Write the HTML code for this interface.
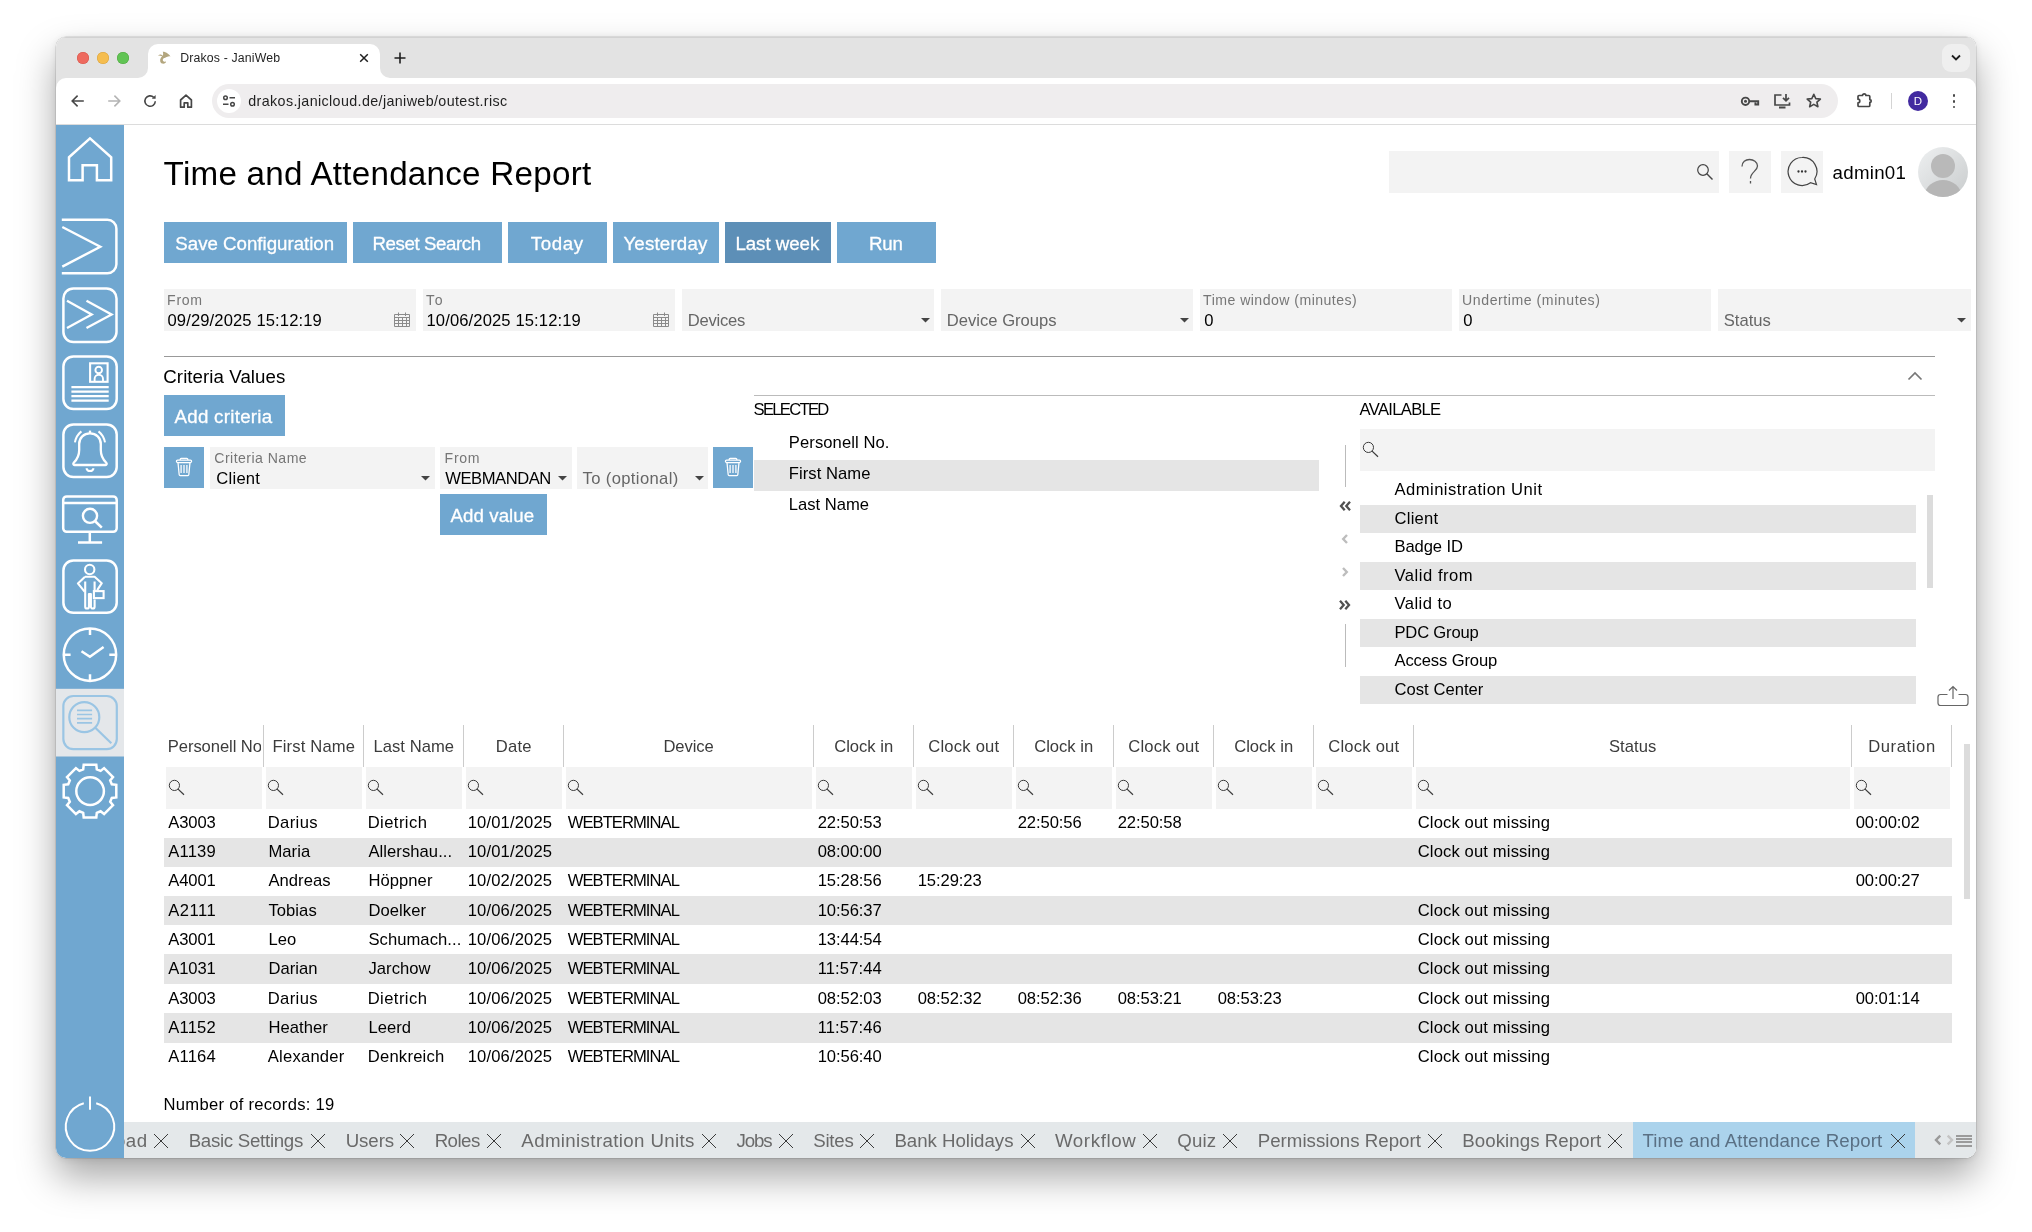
<!DOCTYPE html>
<html lang="en"><head><meta charset="utf-8"><title>Drakos - JaniWeb</title>
<style>
html,body{margin:0;padding:0}
body{width:2032px;height:1232px;background:#fff;position:relative;overflow:hidden;font-family:"Liberation Sans",sans-serif}
#win{position:absolute;left:56px;top:37px;width:1920px;height:1121px;border-radius:10px;overflow:hidden;background:#fff;will-change:transform}
#shadow{position:absolute;left:56px;top:37px;width:1920px;height:1121px;border-radius:10px;box-shadow:0 0 0 0.500px rgba(0,0,0,.16),0 19px 38px rgba(0,0,0,.35),0 1px 7px rgba(0,0,0,.09)}
#win div,#win svg.a,#win span.t{position:absolute}
#win span.t{white-space:nowrap;font-family:"Liberation Sans",sans-serif}
#win i{display:block}
</style></head><body>
<div id="shadow"></div>
<div id="win">
<div style="left:0px;top:0px;width:1920px;height:60px;background:#e3e3e3;"></div>
<div style="left:0px;top:0px;width:1920px;height:1px;background:#d2d2d2;"></div>
<div style="left:0px;top:41px;width:1920px;height:46px;background:#fff;border-radius:10px 10px 0 0;"></div>
<div style="left:0px;top:87px;width:1920px;height:1px;background:#dcdcdc;"></div>
<div style="left:21px;top:15px;width:12px;height:12px;background:#ee6a5f;border-radius:50%;box-shadow:inset 0 0 0 0.5px #d5554a;"></div>
<div style="left:41px;top:15px;width:12px;height:12px;background:#f5bd4f;border-radius:50%;box-shadow:inset 0 0 0 0.5px #d8a13c;"></div>
<div style="left:61px;top:15px;width:12px;height:12px;background:#61c454;border-radius:50%;box-shadow:inset 0 0 0 0.5px #4fa63f;"></div>
<div style="left:92px;top:7px;width:232px;height:34px;background:#fff;border-radius:10px 10px 0 0;"></div>
<svg class="a" style="left:82px;top:31px;" width="10" height="10" viewBox="0 0 10 10"><path d="M10 0v10H0A10 10 0 0 0 10 0z" fill="#fff"/></svg>
<svg class="a" style="left:324px;top:31px;" width="10" height="10" viewBox="0 0 10 10"><path d="M0 0v10h10A10 10 0 0 1 0 0z" fill="#fff"/></svg>
<svg class="a" style="left:101px;top:13px;" width="16" height="16" viewBox="0 0 16 16"><path d="M0.800 5.400C2 4.600 3 4.300 3.800 4.400C4.600 4.500 5.300 5 5.900 5.700C6.300 4.200 6.200 2.800 5.700 1.800C7.500 1.800 9.400 2.400 10.600 3.400C12 4.300 13 5.300 13.500 6.500C12.300 6.200 11 6.400 9.800 6.900C9.200 7.100 8.700 7.400 8.300 7.700C7 8 6.200 8.500 5.900 9.300C5.600 10.200 5.900 11 6.700 11.400C7.400 11.800 8.300 11.800 9 11.600C9 12.100 8.800 12.500 8.600 12.800C7.500 13.600 6.200 13.800 5.100 13.500C4.100 13.100 3.400 12.300 3.200 11.200C3 10.100 3.200 9 3.800 8.100C4.200 7.400 4.700 6.800 5.200 6.300C4 5.600 2.400 5.400 0.800 5.400Z" fill="#b3a67e"/></svg>
<span class="t" style="left:124.30px;top:15px;font-size:12.3px;line-height:12.3px;color:#1f1f1f;letter-spacing:0.152px;">Drakos - JaniWeb</span>
<svg class="a" style="left:302px;top:15px;" width="12" height="12" viewBox="0 0 12 12"><path d="M2.200 2.200l7.600 7.600M9.800 2.200l-7.600 7.600" stroke="#1f1f1f" stroke-width="1.500" fill="none"/></svg>
<svg class="a" style="left:337px;top:14px;" width="14" height="14" viewBox="0 0 14 14"><path d="M7 1.500v11M1.500 7h11" stroke="#1f1f1f" stroke-width="1.600" fill="none"/></svg>
<div style="left:1886px;top:7px;width:28px;height:28px;background:#efefef;border-radius:9px;"></div>
<svg class="a" style="left:1893px;top:15px;" width="14" height="12" viewBox="0 0 14 12"><path d="M3 3.500l4 4 4-4" stroke="#1f1f1f" stroke-width="1.800" fill="none"/></svg>
<svg class="a" style="left:13px;top:55px;" width="18" height="18" viewBox="0 0 18 18"><path d="M14.800 9H3.700M8.600 3.600L3.200 9l5.400 5.400" stroke="#474747" stroke-width="1.600" fill="none"/></svg>
<svg class="a" style="left:49px;top:55px;" width="18" height="18" viewBox="0 0 18 18"><path d="M3.200 9h11.100M9.400 3.600L14.800 9l-5.400 5.400" stroke="#b4b4b4" stroke-width="1.600" fill="none"/></svg>
<svg class="a" style="left:85px;top:55px;" width="18" height="18" viewBox="0 0 18 18"><path d="M14.300 9.300A5.200 5.200 0 1 1 12.700 5.300" stroke="#474747" stroke-width="1.600" fill="none"/><path d="M14.600 3v3.800h-3.800z" fill="#474747"/></svg>
<svg class="a" style="left:121px;top:55px;" width="18" height="18" viewBox="0 0 18 18"><path d="M3.600 8L9 3.200 14.400 8v7.200h-3.600v-4.400H7.200v4.400H3.600z" stroke="#474747" stroke-width="1.700" fill="none" stroke-linejoin="round"/></svg>
<div style="left:156px;top:47px;width:1626px;height:34px;background:#efedee;border-radius:17px;"></div>
<div style="left:161px;top:52px;width:24px;height:24px;background:#fff;border-radius:50%;"></div>
<svg class="a" style="left:165px;top:56px;" width="16" height="16" viewBox="0 0 16 16"><g stroke="#474747" stroke-width="1.500" fill="none"><circle cx="4.500" cy="4.800" r="1.800"/><path d="M8.500 4.800h5.500"/><circle cx="11.500" cy="11.200" r="1.800"/><path d="M2 11.200h5.500"/></g></svg>
<span class="t" style="left:192.30px;top:57px;font-size:14.3px;line-height:14.3px;color:#1f1f1f;letter-spacing:0.372px;">drakos.janicloud.de/janiweb/outest.risc</span>
<svg class="a" style="left:1683px;top:55px;" width="22" height="18" viewBox="0 0 22 18"><g fill="none" stroke="#474747" stroke-width="1.900"><circle cx="6.500" cy="9.300" r="3.700"/><path d="M10.200 9.300h9v3.200h-2.800v-2"/></g><circle cx="6.500" cy="9.300" r="1.500" fill="#474747"/></svg>
<svg class="a" style="left:1716px;top:54px;" width="20" height="20" viewBox="0 0 20 20"><g fill="none" stroke="#474747" stroke-width="1.700"><path d="M9.500 4H3v10h14.500V11.500"/><path d="M7 16.500h6.500" stroke-width="2"/><path d="M14 3v6.500M11 6.800l3 3 3-3"/></g></svg>
<svg class="a" style="left:1749px;top:55.3px;" width="17.6" height="17.6" viewBox="0 0 20 20"><path d="M10 2.600l2.250 4.900 5.250.55-3.950 3.550 1.150 5.200L10 14.100l-4.700 2.700 1.150-5.200L2.500 8.050l5.250-.55z" fill="none" stroke="#474747" stroke-width="1.800" stroke-linejoin="round"/></svg>
<svg class="a" style="left:1798px;top:54px;" width="20" height="20" viewBox="0 0 20 20"><path d="M5 4.500H8.500a1.700 1.700 0 0 1 3.400 0H14.800a1 1 0 0 1 1 1V8.600a1.400 1.400 0 0 1 0 2.800v3.100a1 1 0 0 1-1 1H5a1 1 0 0 1-1-1V11.800a1.800 1.800 0 0 0 0-3.600V5.500a1 1 0 0 1 1-1z" fill="none" stroke="#474747" stroke-width="1.700" stroke-linejoin="round"/></svg>
<div style="left:1834.5px;top:56px;width:1.5px;height:16px;background:#d4d4d4;"></div>
<div style="left:1852px;top:54px;width:20px;height:20px;background:#422aa0;border-radius:50%;"></div>
<span class="t" style="left:1857.85px;top:59px;font-size:11.5px;line-height:11.5px;color:#fff;letter-spacing:0.000px;">D</span>
<div style="left:1896.6px;top:57.2px;width:2.8px;height:2.8px;background:#474747;border-radius:50%;"></div>
<div style="left:1896.6px;top:62.9px;width:2.8px;height:2.8px;background:#474747;border-radius:50%;"></div>
<div style="left:1896.6px;top:68.6px;width:2.8px;height:2.8px;background:#474747;border-radius:50%;"></div>
<div style="left:0px;top:88px;width:68px;height:1033px;background:#70a7d0;"></div>
<span class="t" style="left:107.60px;top:120px;font-size:33.2px;line-height:33.2px;color:#000;letter-spacing:0.254px;">Time and Attendance Report</span>
<div style="left:1333px;top:114px;width:330px;height:42px;background:#f3f3f3;"></div>
<div style="left:1673px;top:114px;width:42px;height:42px;background:#f3f3f3;"></div>
<div style="left:1725px;top:114px;width:42px;height:42px;background:#f3f3f3;"></div>
<svg class="a" style="left:1640px;top:126px;" width="18" height="18" viewBox="0 0 18 18"><circle cx="7" cy="7" r="5.300" fill="none" stroke="#444" stroke-width="1.200"/><path d="M10.800 10.800L16.500 16.500" stroke="#444" stroke-width="1.400"/></svg>
<svg class="a" style="left:1680px;top:119px;" width="28" height="32" viewBox="0 0 28 32"><path d="M6 10.500C6 6 9.500 3.500 13.500 3.500S21.500 6 21.500 10c0 5-7 6-7 12.500" fill="none" stroke="#555" stroke-width="1.300"/><path d="M14.500 25v2.500" stroke="#555" stroke-width="1.300"/></svg>
<svg class="a" style="left:1729px;top:118px;" width="34" height="34" viewBox="0 0 34 34"><path d="M17 2.500a14 14 0 1 0 8.500 25.200l6 1.800-1.800-5.500A14 14 0 0 0 17 2.500z" fill="none" stroke="#444" stroke-width="1.200"/><g fill="#333"><circle cx="13.500" cy="16.500" r="1.150"/><circle cx="17" cy="16.500" r="1.150"/><circle cx="20.500" cy="16.500" r="1.150"/></g></svg>
<span class="t" style="left:1776.50px;top:127px;font-size:18.7px;line-height:18.7px;color:#000;letter-spacing:0.295px;">admin01</span>
<div style="left:1862px;top:109.5px;width:50px;height:50px;border-radius:50%;background:linear-gradient(135deg,#eef0f1,#c9cccd);overflow:hidden"><i style="position:absolute;left:12.900px;top:7.200px;width:24.400px;height:24.400px;border-radius:50%;background:#b9b9b9"></i><i style="position:absolute;left:7px;top:33px;width:36px;height:30px;border-radius:50% 50% 0 0;background:#b6b6b6"></i></div>
<div style="left:108px;top:185px;width:183px;height:41px;background:#70a7d0;"></div>
<span class="t" style="left:119.30px;top:198px;font-size:18.7px;line-height:18.7px;color:#fff;letter-spacing:-0.005px;-webkit-text-stroke:0.300px #fff;">Save Configuration</span>
<div style="left:297px;top:185px;width:149px;height:41px;background:#70a7d0;"></div>
<span class="t" style="left:316.50px;top:198px;font-size:18.7px;line-height:18.7px;color:#fff;letter-spacing:-0.419px;-webkit-text-stroke:0.300px #fff;">Reset Search</span>
<div style="left:452px;top:185px;width:99px;height:41px;background:#70a7d0;"></div>
<span class="t" style="left:474.80px;top:198px;font-size:18.7px;line-height:18.7px;color:#fff;letter-spacing:0.590px;-webkit-text-stroke:0.300px #fff;">Today</span>
<div style="left:557px;top:185px;width:106px;height:41px;background:#70a7d0;"></div>
<span class="t" style="left:567.40px;top:198px;font-size:18.7px;line-height:18.7px;color:#fff;letter-spacing:0.187px;-webkit-text-stroke:0.300px #fff;">Yesterday</span>
<div style="left:669px;top:185px;width:106px;height:41px;background:#5d8fb7;"></div>
<span class="t" style="left:679.40px;top:198px;font-size:18.7px;line-height:18.7px;color:#fff;letter-spacing:-0.029px;-webkit-text-stroke:0.300px #fff;">Last week</span>
<div style="left:781px;top:185px;width:99px;height:41px;background:#70a7d0;"></div>
<span class="t" style="left:812.90px;top:198px;font-size:18.7px;line-height:18.7px;color:#fff;letter-spacing:-0.099px;-webkit-text-stroke:0.300px #fff;">Run</span>
<div style="left:108px;top:252px;width:252px;height:42px;background:#f3f3f3;"></div>
<span class="t" style="left:111.10px;top:256px;font-size:14.1px;line-height:14.1px;color:#767676;letter-spacing:0.679px;">From</span>
<span class="t" style="left:111.50px;top:276px;font-size:16.6px;line-height:16.6px;color:#000;letter-spacing:0.112px;">09/29/2025 15:12:19</span>
<svg class="a" style="left:337px;top:274px;" width="18" height="17" viewBox="0 0 18 17"><g fill="none" stroke="#8a8a8a" stroke-width="1"><path d="M1.500 3.500h15v12h-15z"/><path d="M1.500 6.500h15M1.500 9.500h15M1.500 12.500h15M5.500 6.500v9M9.500 6.500v9M13.500 6.500v9"/><path d="M5.500 1.500v3.500M12.500 1.500v3.500"/></g></svg>
<div style="left:367px;top:252px;width:252px;height:42px;background:#f3f3f3;"></div>
<span class="t" style="left:370.10px;top:256px;font-size:14.1px;line-height:14.1px;color:#767676;letter-spacing:1.615px;">To</span>
<span class="t" style="left:370.50px;top:276px;font-size:16.6px;line-height:16.6px;color:#000;letter-spacing:0.112px;">10/06/2025 15:12:19</span>
<svg class="a" style="left:596px;top:274px;" width="18" height="17" viewBox="0 0 18 17"><g fill="none" stroke="#8a8a8a" stroke-width="1"><path d="M1.500 3.500h15v12h-15z"/><path d="M1.500 6.500h15M1.500 9.500h15M1.500 12.500h15M5.500 6.500v9M9.500 6.500v9M13.500 6.500v9"/><path d="M5.500 1.500v3.500M12.500 1.500v3.500"/></g></svg>
<div style="left:626px;top:252px;width:252px;height:42px;background:#f3f3f3;"></div>
<span class="t" style="left:631.80px;top:276px;font-size:16.6px;line-height:16.6px;color:#666;letter-spacing:-0.247px;">Devices</span>
<svg class="a" style="left:864.5px;top:281px;" width="9" height="5" viewBox="0 0 9 5"><path d="M0 0h9L4.500 4.500z" fill="#444"/></svg>
<div style="left:885px;top:252px;width:252px;height:42px;background:#f3f3f3;"></div>
<span class="t" style="left:890.80px;top:276px;font-size:16.6px;line-height:16.6px;color:#666;letter-spacing:0.006px;">Device Groups</span>
<svg class="a" style="left:1123.5px;top:281px;" width="9" height="5" viewBox="0 0 9 5"><path d="M0 0h9L4.500 4.500z" fill="#444"/></svg>
<div style="left:1144px;top:252px;width:252px;height:42px;background:#f3f3f3;"></div>
<span class="t" style="left:1147.10px;top:256px;font-size:14.1px;line-height:14.1px;color:#767676;letter-spacing:0.465px;">Time window (minutes)</span>
<span class="t" style="left:1148.20px;top:276px;font-size:16.6px;line-height:16.6px;color:#000;letter-spacing:0.066px;">0</span>
<div style="left:1403px;top:252px;width:252px;height:42px;background:#f3f3f3;"></div>
<span class="t" style="left:1406.10px;top:256px;font-size:14.1px;line-height:14.1px;color:#767676;letter-spacing:0.560px;">Undertime (minutes)</span>
<span class="t" style="left:1407.20px;top:276px;font-size:16.6px;line-height:16.6px;color:#000;letter-spacing:0.066px;">0</span>
<div style="left:1662px;top:252px;width:253px;height:42px;background:#f3f3f3;"></div>
<span class="t" style="left:1667.80px;top:276px;font-size:16.6px;line-height:16.6px;color:#666;letter-spacing:-0.015px;">Status</span>
<svg class="a" style="left:1900.5px;top:281px;" width="9" height="5" viewBox="0 0 9 5"><path d="M0 0h9L4.500 4.500z" fill="#444"/></svg>
<div style="left:108px;top:319px;width:1771px;height:1px;background:#999;"></div>
<span class="t" style="left:107.30px;top:331px;font-size:18.7px;line-height:18.7px;color:#000;letter-spacing:0.059px;">Criteria Values</span>
<svg class="a" style="left:1851px;top:333px;" width="16" height="11" viewBox="0 0 16 11"><path d="M1.500 9.500L8 3l6.500 6.500" fill="none" stroke="#777" stroke-width="1.700"/></svg>
<div style="left:698px;top:358px;width:1181px;height:1px;background:#bbb;"></div>
<div style="left:108px;top:358px;width:121px;height:41px;background:#70a7d0;"></div>
<span class="t" style="left:118.50px;top:371px;font-size:18.7px;line-height:18.7px;color:#fff;letter-spacing:0.288px;-webkit-text-stroke:0.300px #fff;">Add criteria</span>
<div style="left:108px;top:410px;width:40px;height:41px;background:#70a7d0;"></div>
<svg class="a" style="left:119px;top:420px;" width="18" height="20" viewBox="0 0 18 20"><g fill="none" stroke="#fff" stroke-width="1.250" stroke-linejoin="round"><rect x="1.400" y="3.100" width="15.200" height="2.400" rx="1.200"/><path d="M5.200 3.100V2.300a1 1 0 0 1 1-1h5.600a1 1 0 0 1 1 1v0.800"/><path d="M3 5.600l1.200 12.200a1 1 0 0 0 1 0.900h7.600a1 1 0 0 0 1-0.900l1.200-12.200"/><path d="M6.100 8v8M9 8v8M11.900 8v8"/></g></svg>
<div style="left:154px;top:410px;width:225px;height:42px;background:#f3f3f3;"></div>
<span class="t" style="left:158.30px;top:414px;font-size:14.1px;line-height:14.1px;color:#767676;letter-spacing:0.454px;">Criteria Name</span>
<span class="t" style="left:160.30px;top:434px;font-size:16.6px;line-height:16.6px;color:#000;letter-spacing:0.244px;">Client</span>
<svg class="a" style="left:365px;top:439px;" width="9" height="5" viewBox="0 0 9 5"><path d="M0 0h9L4.500 4.500z" fill="#444"/></svg>
<div style="left:384px;top:410px;width:132px;height:42px;background:#f3f3f3;"></div>
<span class="t" style="left:388.60px;top:414px;font-size:14.1px;line-height:14.1px;color:#767676;letter-spacing:0.679px;">From</span>
<span class="t" style="left:389.30px;top:434px;font-size:16.6px;line-height:16.6px;color:#000;letter-spacing:-0.460px;">WEBMANDAN</span>
<svg class="a" style="left:502px;top:439px;" width="9" height="5" viewBox="0 0 9 5"><path d="M0 0h9L4.500 4.500z" fill="#444"/></svg>
<div style="left:521px;top:410px;width:131px;height:42px;background:#f3f3f3;"></div>
<span class="t" style="left:526.50px;top:434px;font-size:16.6px;line-height:16.6px;color:#666;letter-spacing:0.375px;">To (optional)</span>
<svg class="a" style="left:638.5px;top:439px;" width="9" height="5" viewBox="0 0 9 5"><path d="M0 0h9L4.500 4.500z" fill="#444"/></svg>
<div style="left:657px;top:410px;width:40px;height:41px;background:#70a7d0;"></div>
<svg class="a" style="left:668px;top:420px;" width="18" height="20" viewBox="0 0 18 20"><g fill="none" stroke="#fff" stroke-width="1.250" stroke-linejoin="round"><rect x="1.400" y="3.100" width="15.200" height="2.400" rx="1.200"/><path d="M5.200 3.100V2.300a1 1 0 0 1 1-1h5.600a1 1 0 0 1 1 1v0.800"/><path d="M3 5.600l1.200 12.200a1 1 0 0 0 1 0.900h7.600a1 1 0 0 0 1-0.900l1.200-12.200"/><path d="M6.100 8v8M9 8v8M11.900 8v8"/></g></svg>
<div style="left:384px;top:457px;width:107px;height:41px;background:#70a7d0;"></div>
<span class="t" style="left:394.60px;top:470px;font-size:18.7px;line-height:18.7px;color:#fff;letter-spacing:0.049px;-webkit-text-stroke:0.300px #fff;">Add value</span>
<span class="t" style="left:697.60px;top:365px;font-size:16.6px;line-height:16.6px;color:#000;letter-spacing:-1.700px;">SELECTED</span>
<div style="left:698px;top:423px;width:565px;height:31px;background:#e5e5e5;"></div>
<span class="t" style="left:732.80px;top:398px;font-size:16.6px;line-height:16.6px;color:#000;letter-spacing:0.088px;">Personell No.</span>
<span class="t" style="left:732.80px;top:429px;font-size:16.6px;line-height:16.6px;color:#000;letter-spacing:0.048px;">First Name</span>
<span class="t" style="left:732.80px;top:460px;font-size:16.6px;line-height:16.6px;color:#000;letter-spacing:0.002px;">Last Name</span>
<div style="left:1289px;top:407.5px;width:1px;height:42px;background:#bbb;"></div>
<div style="left:1289px;top:587px;width:1px;height:42.5px;background:#bbb;"></div>
<svg class="a" style="left:1282px;top:462px;" width="14" height="14" viewBox="0 0 14 14"><path d="M6.700 2.800L3 7l3.700 4.200M12 2.800L8.300 7l3.700 4.200" fill="none" stroke="#505050" stroke-width="2.300"/></svg>
<svg class="a" style="left:1284px;top:496px;" width="10" height="12" viewBox="0 0 10 12"><path d="M7 2L3.200 6 7 10" fill="none" stroke="#bdbdbd" stroke-width="2.400"/></svg>
<svg class="a" style="left:1284px;top:529px;" width="10" height="12" viewBox="0 0 10 12"><path d="M3 2L6.800 6 3 10" fill="none" stroke="#bdbdbd" stroke-width="2.400"/></svg>
<svg class="a" style="left:1282px;top:560.5px;" width="14" height="14" viewBox="0 0 14 14"><path d="M2 2.800L5.700 7 2 11.200M7.300 2.800L11 7l-3.700 4.200" fill="none" stroke="#505050" stroke-width="2.300"/></svg>
<span class="t" style="left:1303.60px;top:365px;font-size:16.6px;line-height:16.6px;color:#000;letter-spacing:-0.677px;">AVAILABLE</span>
<div style="left:1304px;top:392px;width:575px;height:41.5px;background:#f3f3f3;"></div>
<svg class="a" style="left:1306px;top:404px;" width="17" height="17" viewBox="0 0 17 17"><circle cx="6.400" cy="6.400" r="5.100" fill="none" stroke="#3a3a3a" stroke-width="1"/><path d="M10.100 10.100L16 15.800" stroke="#3a3a3a" stroke-width="1.200"/></svg>
<span class="t" style="left:1338.50px;top:445px;font-size:16.6px;line-height:16.6px;color:#000;letter-spacing:0.458px;">Administration Unit</span>
<div style="left:1304px;top:468px;width:556px;height:28px;background:#e5e5e5;"></div>
<span class="t" style="left:1338.50px;top:474px;font-size:16.6px;line-height:16.6px;color:#000;letter-spacing:0.244px;">Client</span>
<span class="t" style="left:1338.50px;top:502px;font-size:16.6px;line-height:16.6px;color:#000;letter-spacing:-0.113px;">Badge ID</span>
<div style="left:1304px;top:525px;width:556px;height:28px;background:#e5e5e5;"></div>
<span class="t" style="left:1338.50px;top:531px;font-size:16.6px;line-height:16.6px;color:#000;letter-spacing:0.517px;">Valid from</span>
<span class="t" style="left:1338.50px;top:559px;font-size:16.6px;line-height:16.6px;color:#000;letter-spacing:0.442px;">Valid to</span>
<div style="left:1304px;top:582px;width:556px;height:28px;background:#e5e5e5;"></div>
<span class="t" style="left:1338.50px;top:588px;font-size:16.6px;line-height:16.6px;color:#000;letter-spacing:-0.197px;">PDC Group</span>
<span class="t" style="left:1338.50px;top:616px;font-size:16.6px;line-height:16.6px;color:#000;letter-spacing:-0.130px;">Access Group</span>
<div style="left:1304px;top:639px;width:556px;height:28px;background:#e5e5e5;"></div>
<span class="t" style="left:1338.50px;top:645px;font-size:16.6px;line-height:16.6px;color:#000;letter-spacing:0.036px;">Cost Center</span>
<div style="left:1871px;top:458px;width:6px;height:93px;background:#dcdcdc;"></div>
<svg class="a" style="left:1880px;top:648px;" width="34" height="22" viewBox="0 0 34 22"><g fill="none" stroke="#666" stroke-width="1.200"><path d="M11.500 9.500H4.500a2.500 2.500 0 0 0-2.500 2.500v6a2.500 2.500 0 0 0 2.500 2.500h25a2.500 2.500 0 0 0 2.500-2.500v-6a2.500 2.500 0 0 0-2.500-2.500H22.500"/><path d="M17 14V2M13 5.500L17 1.500l4 4"/></g></svg>
<div style="left:207px;top:688px;width:1px;height:41.5px;background:#ccc;"></div>
<div style="left:110px;top:730px;width:96px;height:41.8px;background:#f3f3f3;"></div>
<svg class="a" style="left:111.5px;top:742px;" width="17" height="17" viewBox="0 0 17 17"><circle cx="6.400" cy="6.400" r="5.100" fill="none" stroke="#3a3a3a" stroke-width="1"/><path d="M10.100 10.100L16 15.800" stroke="#3a3a3a" stroke-width="1.200"/></svg>
<div style="left:108px;top:698px;width:96.5px;height:24px;overflow:hidden"><span class="t" style="left:3.800px;top:4px;font-size:16.600px;line-height:16.600px;color:#3c3c3c;letter-spacing:-0.080px">Personell No.</span></div>
<div style="left:307px;top:688px;width:1px;height:41.5px;background:#ccc;"></div>
<div style="left:209.5px;top:730px;width:96.5px;height:41.8px;background:#f3f3f3;"></div>
<svg class="a" style="left:211px;top:742px;" width="17" height="17" viewBox="0 0 17 17"><circle cx="6.400" cy="6.400" r="5.100" fill="none" stroke="#3a3a3a" stroke-width="1"/><path d="M10.100 10.100L16 15.800" stroke="#3a3a3a" stroke-width="1.200"/></svg>
<span class="t" style="left:216.50px;top:702px;font-size:16.6px;line-height:16.6px;color:#3c3c3c;letter-spacing:0.148px;">First Name</span>
<div style="left:407px;top:688px;width:1px;height:41.5px;background:#ccc;"></div>
<div style="left:309.5px;top:730px;width:96.5px;height:41.8px;background:#f3f3f3;"></div>
<svg class="a" style="left:311px;top:742px;" width="17" height="17" viewBox="0 0 17 17"><circle cx="6.400" cy="6.400" r="5.100" fill="none" stroke="#3a3a3a" stroke-width="1"/><path d="M10.100 10.100L16 15.800" stroke="#3a3a3a" stroke-width="1.200"/></svg>
<span class="t" style="left:317.40px;top:702px;font-size:16.6px;line-height:16.6px;color:#3c3c3c;letter-spacing:0.052px;">Last Name</span>
<div style="left:507px;top:688px;width:1px;height:41.5px;background:#ccc;"></div>
<div style="left:409.5px;top:730px;width:96.5px;height:41.8px;background:#f3f3f3;"></div>
<svg class="a" style="left:411px;top:742px;" width="17" height="17" viewBox="0 0 17 17"><circle cx="6.400" cy="6.400" r="5.100" fill="none" stroke="#3a3a3a" stroke-width="1"/><path d="M10.100 10.100L16 15.800" stroke="#3a3a3a" stroke-width="1.200"/></svg>
<span class="t" style="left:439.75px;top:702px;font-size:16.6px;line-height:16.6px;color:#3c3c3c;letter-spacing:0.216px;">Date</span>
<div style="left:757px;top:688px;width:1px;height:41.5px;background:#ccc;"></div>
<div style="left:509.5px;top:730px;width:246.5px;height:41.8px;background:#f3f3f3;"></div>
<svg class="a" style="left:511px;top:742px;" width="17" height="17" viewBox="0 0 17 17"><circle cx="6.400" cy="6.400" r="5.100" fill="none" stroke="#3a3a3a" stroke-width="1"/><path d="M10.100 10.100L16 15.800" stroke="#3a3a3a" stroke-width="1.200"/></svg>
<span class="t" style="left:607.45px;top:702px;font-size:16.6px;line-height:16.6px;color:#3c3c3c;letter-spacing:-0.066px;">Device</span>
<div style="left:857px;top:688px;width:1px;height:41.5px;background:#ccc;"></div>
<div style="left:759.5px;top:730px;width:96.5px;height:41.8px;background:#f3f3f3;"></div>
<svg class="a" style="left:761px;top:742px;" width="17" height="17" viewBox="0 0 17 17"><circle cx="6.400" cy="6.400" r="5.100" fill="none" stroke="#3a3a3a" stroke-width="1"/><path d="M10.100 10.100L16 15.800" stroke="#3a3a3a" stroke-width="1.200"/></svg>
<span class="t" style="left:778.20px;top:702px;font-size:16.6px;line-height:16.6px;color:#3c3c3c;letter-spacing:-0.011px;">Clock in</span>
<div style="left:957px;top:688px;width:1px;height:41.5px;background:#ccc;"></div>
<div style="left:859.5px;top:730px;width:96.5px;height:41.8px;background:#f3f3f3;"></div>
<svg class="a" style="left:861px;top:742px;" width="17" height="17" viewBox="0 0 17 17"><circle cx="6.400" cy="6.400" r="5.100" fill="none" stroke="#3a3a3a" stroke-width="1"/><path d="M10.100 10.100L16 15.800" stroke="#3a3a3a" stroke-width="1.200"/></svg>
<span class="t" style="left:872.25px;top:702px;font-size:16.6px;line-height:16.6px;color:#3c3c3c;letter-spacing:0.215px;">Clock out</span>
<div style="left:1057px;top:688px;width:1px;height:41.5px;background:#ccc;"></div>
<div style="left:959.5px;top:730px;width:96.5px;height:41.8px;background:#f3f3f3;"></div>
<svg class="a" style="left:961px;top:742px;" width="17" height="17" viewBox="0 0 17 17"><circle cx="6.400" cy="6.400" r="5.100" fill="none" stroke="#3a3a3a" stroke-width="1"/><path d="M10.100 10.100L16 15.800" stroke="#3a3a3a" stroke-width="1.200"/></svg>
<span class="t" style="left:978.20px;top:702px;font-size:16.6px;line-height:16.6px;color:#3c3c3c;letter-spacing:-0.011px;">Clock in</span>
<div style="left:1157px;top:688px;width:1px;height:41.5px;background:#ccc;"></div>
<div style="left:1059.5px;top:730px;width:96.5px;height:41.8px;background:#f3f3f3;"></div>
<svg class="a" style="left:1061px;top:742px;" width="17" height="17" viewBox="0 0 17 17"><circle cx="6.400" cy="6.400" r="5.100" fill="none" stroke="#3a3a3a" stroke-width="1"/><path d="M10.100 10.100L16 15.800" stroke="#3a3a3a" stroke-width="1.200"/></svg>
<span class="t" style="left:1072.25px;top:702px;font-size:16.6px;line-height:16.6px;color:#3c3c3c;letter-spacing:0.215px;">Clock out</span>
<div style="left:1257px;top:688px;width:1px;height:41.5px;background:#ccc;"></div>
<div style="left:1159.5px;top:730px;width:96.5px;height:41.8px;background:#f3f3f3;"></div>
<svg class="a" style="left:1161px;top:742px;" width="17" height="17" viewBox="0 0 17 17"><circle cx="6.400" cy="6.400" r="5.100" fill="none" stroke="#3a3a3a" stroke-width="1"/><path d="M10.100 10.100L16 15.800" stroke="#3a3a3a" stroke-width="1.200"/></svg>
<span class="t" style="left:1178.20px;top:702px;font-size:16.6px;line-height:16.6px;color:#3c3c3c;letter-spacing:-0.011px;">Clock in</span>
<div style="left:1357px;top:688px;width:1px;height:41.5px;background:#ccc;"></div>
<div style="left:1259.5px;top:730px;width:96.5px;height:41.8px;background:#f3f3f3;"></div>
<svg class="a" style="left:1261px;top:742px;" width="17" height="17" viewBox="0 0 17 17"><circle cx="6.400" cy="6.400" r="5.100" fill="none" stroke="#3a3a3a" stroke-width="1"/><path d="M10.100 10.100L16 15.800" stroke="#3a3a3a" stroke-width="1.200"/></svg>
<span class="t" style="left:1272.25px;top:702px;font-size:16.6px;line-height:16.6px;color:#3c3c3c;letter-spacing:0.215px;">Clock out</span>
<div style="left:1795px;top:688px;width:1px;height:41.5px;background:#ccc;"></div>
<div style="left:1359.5px;top:730px;width:434.5px;height:41.8px;background:#f3f3f3;"></div>
<svg class="a" style="left:1361px;top:742px;" width="17" height="17" viewBox="0 0 17 17"><circle cx="6.400" cy="6.400" r="5.100" fill="none" stroke="#3a3a3a" stroke-width="1"/><path d="M10.100 10.100L16 15.800" stroke="#3a3a3a" stroke-width="1.200"/></svg>
<span class="t" style="left:1552.90px;top:702px;font-size:16.6px;line-height:16.6px;color:#3c3c3c;letter-spacing:0.085px;">Status</span>
<div style="left:1895px;top:688px;width:1px;height:41.5px;background:#ccc;"></div>
<div style="left:1797.5px;top:730px;width:96.5px;height:41.8px;background:#f3f3f3;"></div>
<svg class="a" style="left:1799px;top:742px;" width="17" height="17" viewBox="0 0 17 17"><circle cx="6.400" cy="6.400" r="5.100" fill="none" stroke="#3a3a3a" stroke-width="1"/><path d="M10.100 10.100L16 15.800" stroke="#3a3a3a" stroke-width="1.200"/></svg>
<span class="t" style="left:1812.15px;top:702px;font-size:16.6px;line-height:16.6px;color:#3c3c3c;letter-spacing:0.620px;">Duration</span>
<span class="t" style="left:112.20px;top:778px;font-size:16.6px;line-height:16.6px;color:#000;letter-spacing:-0.102px;">A3003</span>
<span class="t" style="left:211.70px;top:778px;font-size:16.6px;line-height:16.6px;color:#000;letter-spacing:0.385px;">Darius</span>
<span class="t" style="left:311.70px;top:778px;font-size:16.6px;line-height:16.6px;color:#000;letter-spacing:0.425px;">Dietrich</span>
<span class="t" style="left:411.70px;top:778px;font-size:16.6px;line-height:16.6px;color:#000;letter-spacing:0.147px;">10/01/2025</span>
<span class="t" style="left:511.70px;top:778px;font-size:16.6px;line-height:16.6px;color:#000;letter-spacing:-0.950px;">WEBTERMINAL</span>
<span class="t" style="left:761.70px;top:778px;font-size:16.6px;line-height:16.6px;color:#000;letter-spacing:-0.075px;">22:50:53</span>
<span class="t" style="left:961.70px;top:778px;font-size:16.6px;line-height:16.6px;color:#000;letter-spacing:-0.075px;">22:50:56</span>
<span class="t" style="left:1061.70px;top:778px;font-size:16.6px;line-height:16.6px;color:#000;letter-spacing:-0.075px;">22:50:58</span>
<span class="t" style="left:1361.70px;top:778px;font-size:16.6px;line-height:16.6px;color:#000;letter-spacing:0.138px;">Clock out missing</span>
<span class="t" style="left:1799.70px;top:778px;font-size:16.6px;line-height:16.6px;color:#000;letter-spacing:-0.075px;">00:00:02</span>
<div style="left:108px;top:801px;width:1787.5px;height:29px;background:#e5e5e5;"></div>
<span class="t" style="left:112.20px;top:807px;font-size:16.6px;line-height:16.6px;color:#000;letter-spacing:0.204px;">A1139</span>
<span class="t" style="left:212.40px;top:807px;font-size:16.6px;line-height:16.6px;color:#000;letter-spacing:0.066px;">Maria</span>
<span class="t" style="left:312.40px;top:807px;font-size:16.6px;line-height:16.6px;color:#000;letter-spacing:0.066px;">Allershau...</span>
<span class="t" style="left:411.70px;top:807px;font-size:16.6px;line-height:16.6px;color:#000;letter-spacing:0.147px;">10/01/2025</span>
<span class="t" style="left:761.70px;top:807px;font-size:16.6px;line-height:16.6px;color:#000;letter-spacing:-0.075px;">08:00:00</span>
<span class="t" style="left:1361.70px;top:807px;font-size:16.6px;line-height:16.6px;color:#000;letter-spacing:0.138px;">Clock out missing</span>
<span class="t" style="left:112.20px;top:836px;font-size:16.6px;line-height:16.6px;color:#000;letter-spacing:-0.102px;">A4001</span>
<span class="t" style="left:212.40px;top:836px;font-size:16.6px;line-height:16.6px;color:#000;letter-spacing:0.066px;">Andreas</span>
<span class="t" style="left:312.40px;top:836px;font-size:16.6px;line-height:16.6px;color:#000;letter-spacing:0.066px;">Höppner</span>
<span class="t" style="left:411.70px;top:836px;font-size:16.6px;line-height:16.6px;color:#000;letter-spacing:0.147px;">10/02/2025</span>
<span class="t" style="left:511.70px;top:836px;font-size:16.6px;line-height:16.6px;color:#000;letter-spacing:-0.950px;">WEBTERMINAL</span>
<span class="t" style="left:761.70px;top:836px;font-size:16.6px;line-height:16.6px;color:#000;letter-spacing:-0.075px;">15:28:56</span>
<span class="t" style="left:861.70px;top:836px;font-size:16.6px;line-height:16.6px;color:#000;letter-spacing:-0.075px;">15:29:23</span>
<span class="t" style="left:1799.70px;top:836px;font-size:16.6px;line-height:16.6px;color:#000;letter-spacing:-0.075px;">00:00:27</span>
<div style="left:108px;top:859px;width:1787.5px;height:29px;background:#e5e5e5;"></div>
<span class="t" style="left:112.20px;top:866px;font-size:16.6px;line-height:16.6px;color:#000;letter-spacing:0.510px;">A2111</span>
<span class="t" style="left:212.40px;top:866px;font-size:16.6px;line-height:16.6px;color:#000;letter-spacing:0.066px;">Tobias</span>
<span class="t" style="left:312.40px;top:866px;font-size:16.6px;line-height:16.6px;color:#000;letter-spacing:0.066px;">Doelker</span>
<span class="t" style="left:411.70px;top:866px;font-size:16.6px;line-height:16.6px;color:#000;letter-spacing:0.147px;">10/06/2025</span>
<span class="t" style="left:511.70px;top:866px;font-size:16.6px;line-height:16.6px;color:#000;letter-spacing:-0.950px;">WEBTERMINAL</span>
<span class="t" style="left:761.70px;top:866px;font-size:16.6px;line-height:16.6px;color:#000;letter-spacing:-0.075px;">10:56:37</span>
<span class="t" style="left:1361.70px;top:866px;font-size:16.6px;line-height:16.6px;color:#000;letter-spacing:0.138px;">Clock out missing</span>
<span class="t" style="left:112.20px;top:895px;font-size:16.6px;line-height:16.6px;color:#000;letter-spacing:-0.102px;">A3001</span>
<span class="t" style="left:212.40px;top:895px;font-size:16.6px;line-height:16.6px;color:#000;letter-spacing:0.066px;">Leo</span>
<span class="t" style="left:312.40px;top:895px;font-size:16.6px;line-height:16.6px;color:#000;letter-spacing:0.066px;">Schumach...</span>
<span class="t" style="left:411.70px;top:895px;font-size:16.6px;line-height:16.6px;color:#000;letter-spacing:0.147px;">10/06/2025</span>
<span class="t" style="left:511.70px;top:895px;font-size:16.6px;line-height:16.6px;color:#000;letter-spacing:-0.950px;">WEBTERMINAL</span>
<span class="t" style="left:761.70px;top:895px;font-size:16.6px;line-height:16.6px;color:#000;letter-spacing:-0.075px;">13:44:54</span>
<span class="t" style="left:1361.70px;top:895px;font-size:16.6px;line-height:16.6px;color:#000;letter-spacing:0.138px;">Clock out missing</span>
<div style="left:108px;top:917px;width:1787.5px;height:30px;background:#e5e5e5;"></div>
<span class="t" style="left:112.20px;top:924px;font-size:16.6px;line-height:16.6px;color:#000;letter-spacing:-0.102px;">A1031</span>
<span class="t" style="left:212.40px;top:924px;font-size:16.6px;line-height:16.6px;color:#000;letter-spacing:0.066px;">Darian</span>
<span class="t" style="left:312.40px;top:924px;font-size:16.6px;line-height:16.6px;color:#000;letter-spacing:0.066px;">Jarchow</span>
<span class="t" style="left:411.70px;top:924px;font-size:16.6px;line-height:16.6px;color:#000;letter-spacing:0.147px;">10/06/2025</span>
<span class="t" style="left:511.70px;top:924px;font-size:16.6px;line-height:16.6px;color:#000;letter-spacing:-0.950px;">WEBTERMINAL</span>
<span class="t" style="left:761.70px;top:924px;font-size:16.6px;line-height:16.6px;color:#000;letter-spacing:0.099px;">11:57:44</span>
<span class="t" style="left:1361.70px;top:924px;font-size:16.6px;line-height:16.6px;color:#000;letter-spacing:0.138px;">Clock out missing</span>
<span class="t" style="left:112.20px;top:954px;font-size:16.6px;line-height:16.6px;color:#000;letter-spacing:-0.102px;">A3003</span>
<span class="t" style="left:211.70px;top:954px;font-size:16.6px;line-height:16.6px;color:#000;letter-spacing:0.385px;">Darius</span>
<span class="t" style="left:311.70px;top:954px;font-size:16.6px;line-height:16.6px;color:#000;letter-spacing:0.425px;">Dietrich</span>
<span class="t" style="left:411.70px;top:954px;font-size:16.6px;line-height:16.6px;color:#000;letter-spacing:0.147px;">10/06/2025</span>
<span class="t" style="left:511.70px;top:954px;font-size:16.6px;line-height:16.6px;color:#000;letter-spacing:-0.950px;">WEBTERMINAL</span>
<span class="t" style="left:761.70px;top:954px;font-size:16.6px;line-height:16.6px;color:#000;letter-spacing:-0.075px;">08:52:03</span>
<span class="t" style="left:861.70px;top:954px;font-size:16.6px;line-height:16.6px;color:#000;letter-spacing:-0.075px;">08:52:32</span>
<span class="t" style="left:961.70px;top:954px;font-size:16.6px;line-height:16.6px;color:#000;letter-spacing:-0.075px;">08:52:36</span>
<span class="t" style="left:1061.70px;top:954px;font-size:16.6px;line-height:16.6px;color:#000;letter-spacing:-0.075px;">08:53:21</span>
<span class="t" style="left:1161.70px;top:954px;font-size:16.6px;line-height:16.6px;color:#000;letter-spacing:-0.075px;">08:53:23</span>
<span class="t" style="left:1361.70px;top:954px;font-size:16.6px;line-height:16.6px;color:#000;letter-spacing:0.138px;">Clock out missing</span>
<span class="t" style="left:1799.70px;top:954px;font-size:16.6px;line-height:16.6px;color:#000;letter-spacing:-0.075px;">00:01:14</span>
<div style="left:108px;top:976px;width:1787.5px;height:29.5px;background:#e5e5e5;"></div>
<span class="t" style="left:112.20px;top:983px;font-size:16.6px;line-height:16.6px;color:#000;letter-spacing:0.204px;">A1152</span>
<span class="t" style="left:212.40px;top:983px;font-size:16.6px;line-height:16.6px;color:#000;letter-spacing:0.066px;">Heather</span>
<span class="t" style="left:312.40px;top:983px;font-size:16.6px;line-height:16.6px;color:#000;letter-spacing:0.066px;">Leerd</span>
<span class="t" style="left:411.70px;top:983px;font-size:16.6px;line-height:16.6px;color:#000;letter-spacing:0.147px;">10/06/2025</span>
<span class="t" style="left:511.70px;top:983px;font-size:16.6px;line-height:16.6px;color:#000;letter-spacing:-0.950px;">WEBTERMINAL</span>
<span class="t" style="left:761.70px;top:983px;font-size:16.6px;line-height:16.6px;color:#000;letter-spacing:0.099px;">11:57:46</span>
<span class="t" style="left:1361.70px;top:983px;font-size:16.6px;line-height:16.6px;color:#000;letter-spacing:0.138px;">Clock out missing</span>
<span class="t" style="left:112.20px;top:1012px;font-size:16.6px;line-height:16.6px;color:#000;letter-spacing:0.204px;">A1164</span>
<span class="t" style="left:211.70px;top:1012px;font-size:16.6px;line-height:16.6px;color:#000;letter-spacing:0.238px;">Alexander</span>
<span class="t" style="left:311.70px;top:1012px;font-size:16.6px;line-height:16.6px;color:#000;letter-spacing:0.240px;">Denkreich</span>
<span class="t" style="left:411.70px;top:1012px;font-size:16.6px;line-height:16.6px;color:#000;letter-spacing:0.147px;">10/06/2025</span>
<span class="t" style="left:511.70px;top:1012px;font-size:16.6px;line-height:16.6px;color:#000;letter-spacing:-0.950px;">WEBTERMINAL</span>
<span class="t" style="left:761.70px;top:1012px;font-size:16.6px;line-height:16.6px;color:#000;letter-spacing:-0.075px;">10:56:40</span>
<span class="t" style="left:1361.70px;top:1012px;font-size:16.6px;line-height:16.6px;color:#000;letter-spacing:0.138px;">Clock out missing</span>
<div style="left:1908px;top:706.5px;width:5.5px;height:155.5px;background:#dcdcdc;"></div>
<span class="t" style="left:107.60px;top:1060px;font-size:16.6px;line-height:16.6px;color:#000;letter-spacing:0.277px;">Number of records: 19</span>
<div style="left:68px;top:1085px;width:1852px;height:36px;background:#e4e8ea;"></div>
<div style="left:1577px;top:1085px;width:282px;height:36px;background:#abd3ec;"></div>
<div style="left:68px;top:1085px;width:40px;height:36px;overflow:hidden"><span class="t" style="right:16.400px;top:10px;font-size:18.700px;line-height:18.700px;color:#6a6a6a;letter-spacing:0.500px">Upload</span></div>
<svg class="a" style="left:96.8px;top:1095.5px;" width="16" height="16" viewBox="0 0 16 16"><path d="M1 1l14 14M15 1L1 15" stroke="#3a3a3a" stroke-width="1" fill="none"/></svg>
<span class="t" style="left:132.70px;top:1095px;font-size:18.7px;line-height:18.7px;color:#6a6a6a;letter-spacing:-0.294px;">Basic Settings</span>
<svg class="a" style="left:254.3px;top:1095.5px;" width="16" height="16" viewBox="0 0 16 16"><path d="M1 1l14 14M15 1L1 15" stroke="#3a3a3a" stroke-width="1" fill="none"/></svg>
<span class="t" style="left:289.70px;top:1095px;font-size:18.7px;line-height:18.7px;color:#6a6a6a;letter-spacing:-0.090px;">Users</span>
<svg class="a" style="left:342.9px;top:1095.5px;" width="16" height="16" viewBox="0 0 16 16"><path d="M1 1l14 14M15 1L1 15" stroke="#3a3a3a" stroke-width="1" fill="none"/></svg>
<span class="t" style="left:378.70px;top:1095px;font-size:18.7px;line-height:18.7px;color:#6a6a6a;letter-spacing:-0.559px;">Roles</span>
<svg class="a" style="left:429.5px;top:1095.5px;" width="16" height="16" viewBox="0 0 16 16"><path d="M1 1l14 14M15 1L1 15" stroke="#3a3a3a" stroke-width="1" fill="none"/></svg>
<span class="t" style="left:465.30px;top:1095px;font-size:18.7px;line-height:18.7px;color:#6a6a6a;letter-spacing:0.367px;">Administration Units</span>
<svg class="a" style="left:645px;top:1095.5px;" width="16" height="16" viewBox="0 0 16 16"><path d="M1 1l14 14M15 1L1 15" stroke="#3a3a3a" stroke-width="1" fill="none"/></svg>
<span class="t" style="left:680.40px;top:1095px;font-size:18.7px;line-height:18.7px;color:#6a6a6a;letter-spacing:-1.103px;">Jobs</span>
<svg class="a" style="left:721.8px;top:1095.5px;" width="16" height="16" viewBox="0 0 16 16"><path d="M1 1l14 14M15 1L1 15" stroke="#3a3a3a" stroke-width="1" fill="none"/></svg>
<span class="t" style="left:757.20px;top:1095px;font-size:18.7px;line-height:18.7px;color:#6a6a6a;letter-spacing:-0.247px;">Sites</span>
<svg class="a" style="left:803px;top:1095.5px;" width="16" height="16" viewBox="0 0 16 16"><path d="M1 1l14 14M15 1L1 15" stroke="#3a3a3a" stroke-width="1" fill="none"/></svg>
<span class="t" style="left:838.40px;top:1095px;font-size:18.7px;line-height:18.7px;color:#6a6a6a;letter-spacing:-0.030px;">Bank Holidays</span>
<svg class="a" style="left:964px;top:1095.5px;" width="16" height="16" viewBox="0 0 16 16"><path d="M1 1l14 14M15 1L1 15" stroke="#3a3a3a" stroke-width="1" fill="none"/></svg>
<span class="t" style="left:998.90px;top:1095px;font-size:18.7px;line-height:18.7px;color:#6a6a6a;letter-spacing:0.622px;">Workflow</span>
<svg class="a" style="left:1086px;top:1095.5px;" width="16" height="16" viewBox="0 0 16 16"><path d="M1 1l14 14M15 1L1 15" stroke="#3a3a3a" stroke-width="1" fill="none"/></svg>
<span class="t" style="left:1121.30px;top:1095px;font-size:18.7px;line-height:18.7px;color:#6a6a6a;letter-spacing:0.148px;">Quiz</span>
<svg class="a" style="left:1165.8px;top:1095.5px;" width="16" height="16" viewBox="0 0 16 16"><path d="M1 1l14 14M15 1L1 15" stroke="#3a3a3a" stroke-width="1" fill="none"/></svg>
<span class="t" style="left:1201.70px;top:1095px;font-size:18.7px;line-height:18.7px;color:#6a6a6a;letter-spacing:0.012px;">Permissions Report</span>
<svg class="a" style="left:1370.5px;top:1095.5px;" width="16" height="16" viewBox="0 0 16 16"><path d="M1 1l14 14M15 1L1 15" stroke="#3a3a3a" stroke-width="1" fill="none"/></svg>
<span class="t" style="left:1406.30px;top:1095px;font-size:18.7px;line-height:18.7px;color:#6a6a6a;letter-spacing:0.048px;">Bookings Report</span>
<svg class="a" style="left:1550.7px;top:1095.5px;" width="16" height="16" viewBox="0 0 16 16"><path d="M1 1l14 14M15 1L1 15" stroke="#3a3a3a" stroke-width="1" fill="none"/></svg>
<span class="t" style="left:1586.50px;top:1095px;font-size:18.7px;line-height:18.7px;color:#5a7084;letter-spacing:0.103px;">Time and Attendance Report</span>
<svg class="a" style="left:1834.1px;top:1095.5px;" width="16" height="16" viewBox="0 0 16 16"><path d="M1 1l14 14M15 1L1 15" stroke="#3a3a3a" stroke-width="1" fill="none"/></svg>
<svg class="a" style="left:1876px;top:1096px;" width="12" height="14" viewBox="0 0 12 14"><path d="M8.300 2.600L4 7l4.300 4.400" fill="none" stroke="#9a9a9a" stroke-width="2.400"/></svg>
<svg class="a" style="left:1887.5px;top:1096px;" width="12" height="14" viewBox="0 0 12 14"><path d="M3.700 2.600L8 7l-4.300 4.400" fill="none" stroke="#c4c4c4" stroke-width="2.400"/></svg>
<div style="left:1900.4px;top:1098px;width:15.6px;height:2px;background:#9b9b9b;"></div>
<div style="left:1900.4px;top:1101.2px;width:15.6px;height:2px;background:#9b9b9b;"></div>
<div style="left:1900.4px;top:1104.4px;width:15.6px;height:2px;background:#9b9b9b;"></div>
<div style="left:1900.4px;top:1107.6px;width:15.6px;height:2px;background:#9b9b9b;"></div>
<svg class="a" style="left:0;top:0" width="70" height="1121" viewBox="56 37 70 1121">
<rect x="56" y="688.800" width="68" height="67.700" fill="#e4e7ea"/>
<g stroke="#fff" fill="none" stroke-width="2.500" stroke-linejoin="round" stroke-linecap="butt">
<path d="M69 157.200L90 138.400l21.200 18.800V180.200H96.900V165.300H82.600v14.900H69z" stroke-linejoin="miter"/>
<path d="M61.800 219.800H107.400a9 9 0 0 1 9 9V264.200a9 9 0 0 1-9 9H61.800"/>
<path d="M62.300 227L100.300 246.700 62.300 266.600" stroke-width="2.400" stroke-linejoin="miter"/>
<rect x="63.4" y="288.4" width="53.1" height="53.7" rx="10"/>
<path d="M67 300.800L91.700 314.400 67 328M86.500 300.800L111.600 314.400 86.500 328" stroke-width="2.300" stroke-linejoin="miter"/>
<rect x="63.4" y="356.5" width="53.3" height="52.5" rx="10"/>
<g stroke-width="2.100"><rect x="90.100" y="363.300" width="17.500" height="18.500" stroke-linejoin="miter"/><circle cx="98.700" cy="370" r="3.300" stroke-width="1.900"/><path d="M94.600 381v-2a4.200 4.200 0 0 1 8.400 0v2" stroke-width="1.900"/></g><path d="M71.400 387.100h37.300M71.400 391.700h37.300M71.400 396.200h37.300M71.400 400.700h37.300" stroke-width="2.300"/>
<rect x="63.4" y="424.5" width="53.3" height="52.5" rx="10"/>
<g stroke-width="2.300"><path d="M74.500 465c-1.200 0-1.600-1.400-.800-2.200 3.500-3.400 5.500-7.200 5.500-12.800v-6c0-6.200 4.600-10.600 10.800-10.600s10.800 4.400 10.800 10.600v6c0 5.600 2 9.400 5.500 12.800.800.800.400 2.200-.800 2.200z"/><path d="M86.400 468.200a3.700 3.700 0 0 0 7.200 0" stroke-width="2"/><path d="M90 430.600v2.800"/><path d="M81.400 431.400c-3.300 2.600-5.600 6.400-6.500 11M98.500 431.400c3.300 2.600 5.600 6.400 6.500 11" stroke-width="2"/></g>
<rect x="63.200" y="496.400" width="53.500" height="35.400" rx="3.500"/>
<path d="M63.200 502.900h53.500M89.800 532v10.600M78 542.600h24.100"/>
<circle cx="90" cy="515.800" r="7.100" stroke-width="2.400"/><path d="M95.200 521.200l6.600 6.400" stroke-width="2.600"/>
<rect x="63.4" y="560.5" width="53.3" height="52.2" rx="10"/>
<g stroke-width="2.100"><circle cx="89.700" cy="569.500" r="4.700"/><path d="M85 576.700h9.600l7.200 6.500-4.600 7M85 576.700l-7.100 6.700 6.700 8.300"/><path d="M85.200 581.500v25.200a1.850 1.850 0 0 0 3.700 0V594h2v12.700a1.850 1.850 0 0 0 3.700 0V599.500M94.600 581.500v9"/><rect x="93.900" y="591.100" width="9.700" height="7" stroke-linejoin="miter"/></g>
<circle cx="89.950" cy="654.700" r="26.200"/>
<path d="M90 628.500v6.400M90 674.300v6.600M63.800 654.700h6.800M109.300 654.700h6.800"/><path d="M81.500 651.200l8.400 5.500 13.700-9.800" stroke-linejoin="miter"/>
</g>
<g stroke="#9ac5e4" fill="none" stroke-width="2.200" stroke-linecap="butt"><rect x="63.35" y="696" width="53.45" height="53.1" rx="10"/><circle cx="84.300" cy="717.200" r="15"/><path d="M95.300 727.800l16 15.400"/><path d="M77 710.400h15.100M77 714.500h15.100M77 718.700h15.100M77 722.900h15.100" stroke-width="1.700"/></g>
<g stroke="#fff" fill="none" stroke-width="2.500" stroke-linejoin="round" stroke-linecap="butt" stroke-width="2.500"><path d="M83.2 769.3 L83.7 764.8 L96.3 764.8 L96.8 769.3 L100.6 770.9 L104.1 768.1 L113.0 777.0 L110.2 780.5 L111.8 784.3 L116.3 784.8 L116.3 797.4 L111.8 797.9 L110.2 801.7 L113.0 805.2 L104.1 814.1 L100.6 811.3 L96.8 812.9 L96.3 817.4 L83.7 817.4 L83.2 812.9 L79.4 811.3 L75.9 814.1 L67.0 805.2 L69.8 801.7 L68.2 797.9 L63.7 797.4 L63.7 784.8 L68.2 784.3 L69.8 780.5 L67.0 777.0 L75.9 768.1 L79.4 770.9Z" stroke-linejoin="miter"/><circle cx="90.100" cy="791.100" r="13.800"/></g>
<g stroke="#fff" fill="none" stroke-width="2"><path d="M83.800 1103.200a24.200 24.200 0 1 0 12.400 0M90 1096.500v13.300"/></g>
</svg>
</div>
</body></html>
